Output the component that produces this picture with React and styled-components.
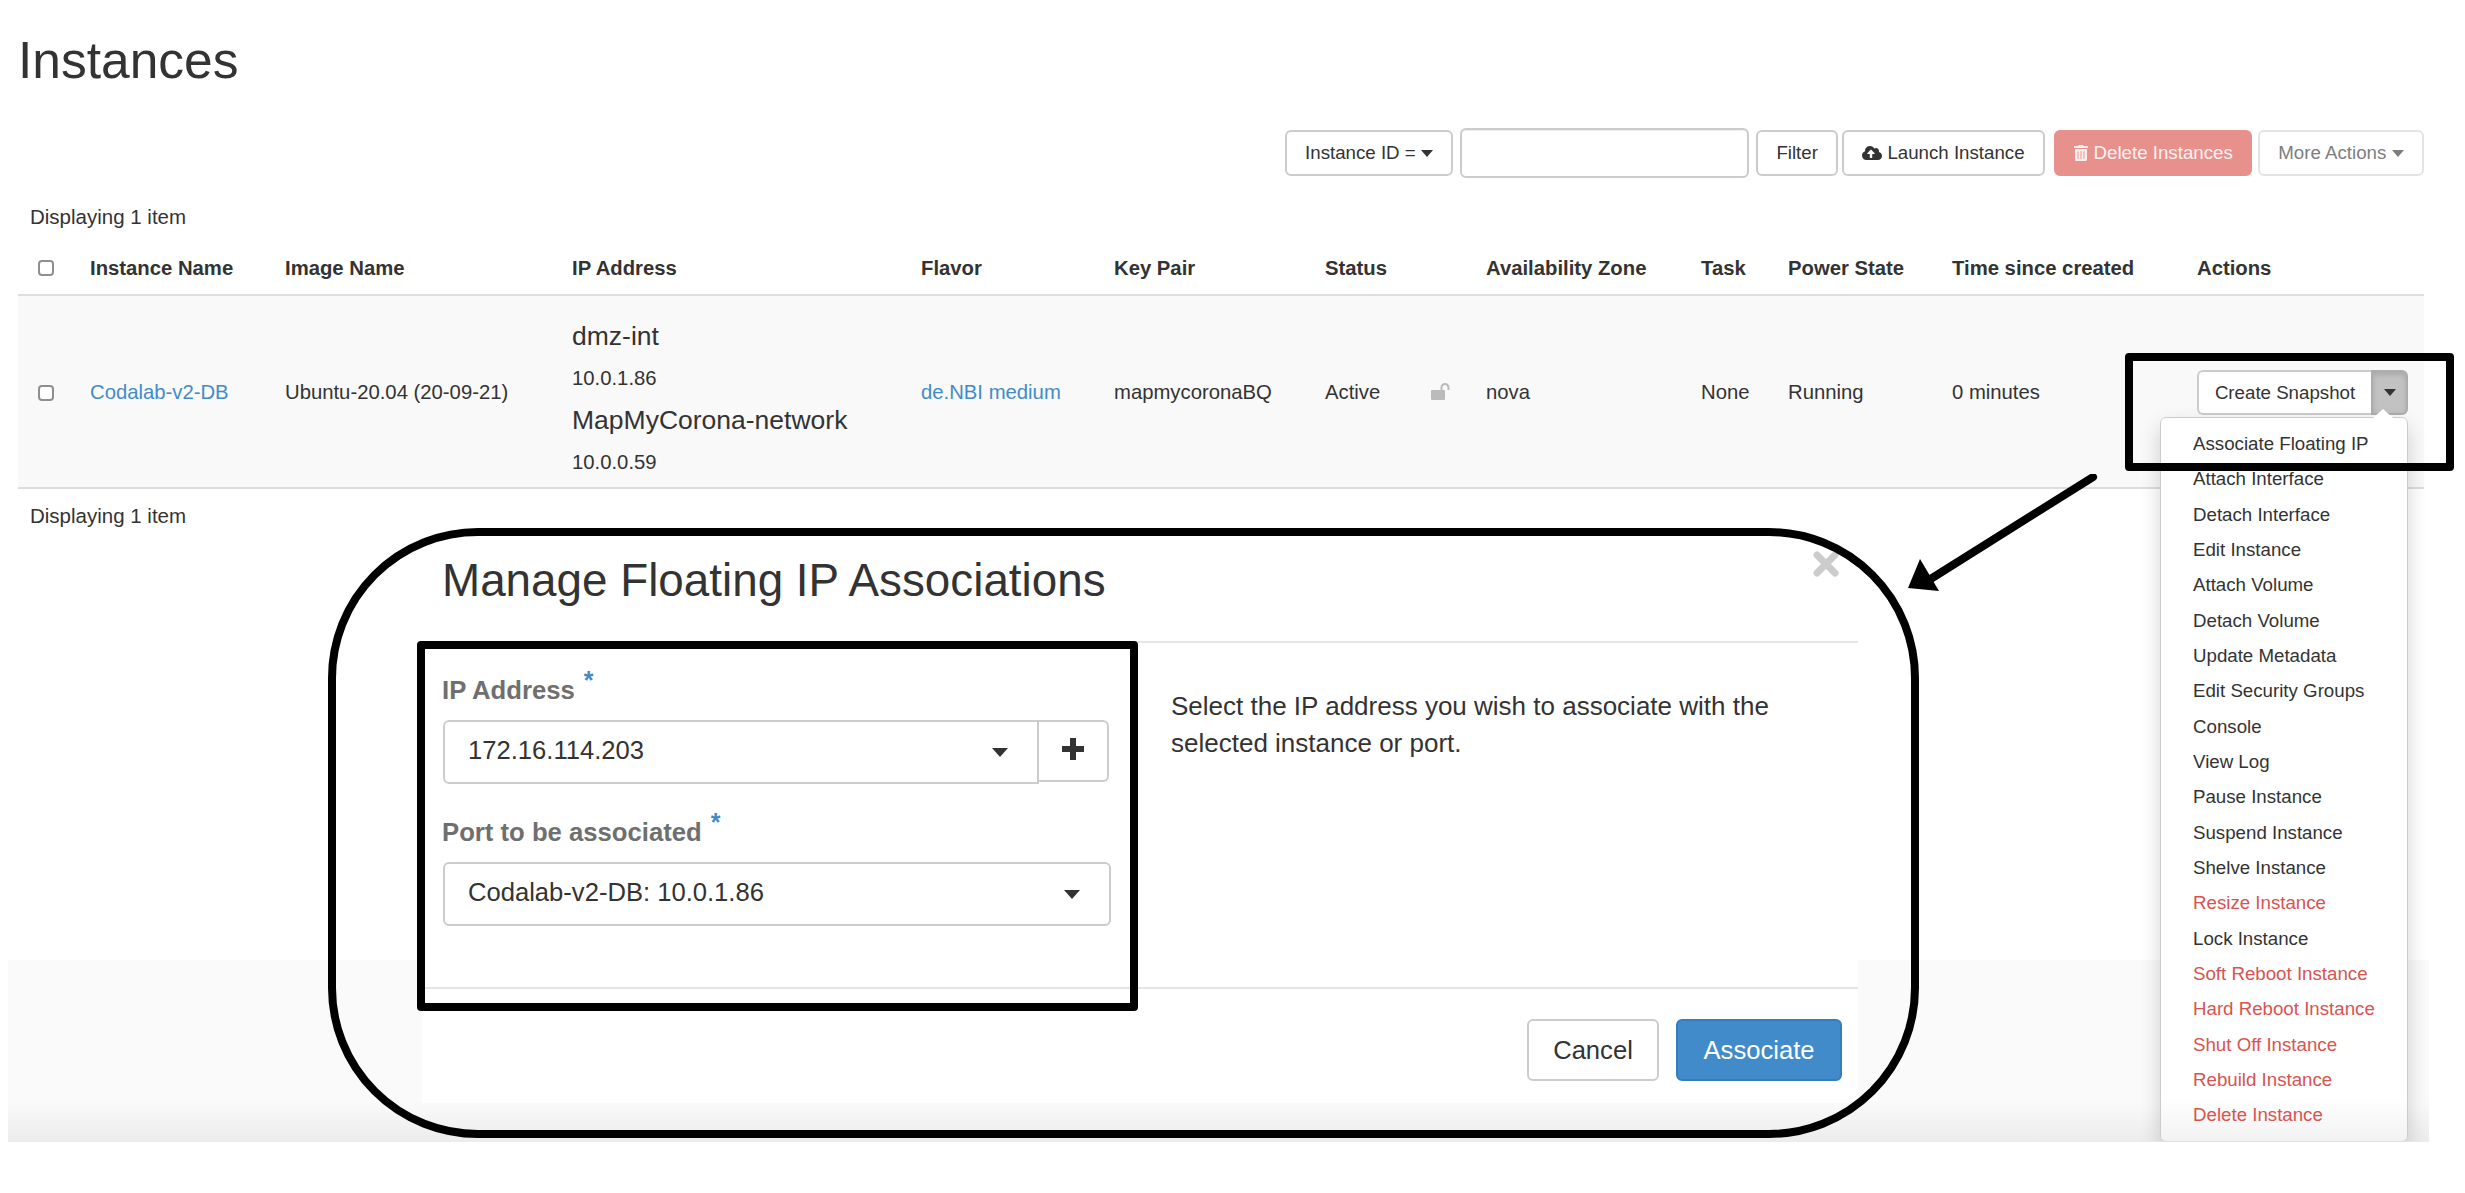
import styled, { createGlobalStyle } from "styled-components"
import { FaCloudUploadAlt, FaTrashAlt } from "react-icons/fa"

const menuItems = [
  { label: "Associate Floating IP" },
  { label: "Attach Interface" },
  { label: "Detach Interface" },
  { label: "Edit Instance" },
  { label: "Attach Volume" },
  { label: "Detach Volume" },
  { label: "Update Metadata" },
  { label: "Edit Security Groups" },
  { label: "Console" },
  { label: "View Log" },
  { label: "Pause Instance" },
  { label: "Suspend Instance" },
  { label: "Shelve Instance" },
  { label: "Resize Instance", danger: true },
  { label: "Lock Instance" },
  { label: "Soft Reboot Instance", danger: true },
  { label: "Hard Reboot Instance", danger: true },
  { label: "Shut Off Instance", danger: true },
  { label: "Rebuild Instance", danger: true },
  { label: "Delete Instance", danger: true },
]

const columns = [72, 195, 287, 349, 193, 211, 161, 215, 87, 164, 245, 227]

const App = () => {
  return (
    <Page>
      <GlobalStyle />
      <Title>Instances</Title>

      <Toolbar>
        <Button>
          Instance ID = <Caret />
        </Button>
        <FilterInput />
        <FilterButton>Filter</FilterButton>
        <LaunchButton>
          <FaCloudUploadAlt size={20} />
          <IconGap />
          Launch Instance
        </LaunchButton>
        <DeleteButton>
          <FaTrashAlt size={16} />
          <IconGap />
          Delete Instances
        </DeleteButton>
        <MutedButton>
          More Actions <Caret />
        </MutedButton>
      </Toolbar>

      <Count>Displaying 1 item</Count>

      <InstanceTable>
        <colgroup>
          {columns.map((width, i) => (
            <col key={i} width={width} />
          ))}
        </colgroup>
        <thead>
          <tr>
            <th><Check /></th>
            <th>Instance Name</th>
            <th>Image Name</th>
            <th>IP Address</th>
            <th>Flavor</th>
            <th>Key Pair</th>
            <th>Status</th>
            <th>Availability Zone</th>
            <th>Task</th>
            <th>Power State</th>
            <th>Time since created</th>
            <th>Actions</th>
          </tr>
        </thead>
        <tbody>
          <tr>
            <td><Check /></td>
            <td><TextLink>Codalab-v2-DB</TextLink></td>
            <td>Ubuntu-20.04 (20-09-21)</td>
            <td>
              <AddressList>
                <NetworkName>dmz-int</NetworkName>
                <Address>10.0.1.86</Address>
                <NetworkName>MapMyCorona-network</NetworkName>
                <Address>10.0.0.59</Address>
              </AddressList>
            </td>
            <td><TextLink>de.NBI medium</TextLink></td>
            <td>mapmycoronaBQ</td>
            <td>
              <StatusCell>
                <StatusText>Active</StatusText>
                <LockIcon viewBox="0 0 20 17">
                  <rect x="0" y="7" width="14" height="10" rx="1" fill="#bbb" />
                  <path d="M10.5 7V4.5a3.5 3.5 0 0 1 7 0V7" fill="none" stroke="#bbb" strokeWidth="2" />
                </LockIcon>
              </StatusCell>
            </td>
            <td>nova</td>
            <td>None</td>
            <td>Running</td>
            <td>0 minutes</td>
            <td>
              <ActionGroup>
                <SnapshotButton>Create Snapshot</SnapshotButton>
                <ToggleButton><Caret /></ToggleButton>
                <ActionMenu>
                  {menuItems.map((item) => (
                    <MenuItem key={item.label} $danger={item.danger}>{item.label}</MenuItem>
                  ))}
                </ActionMenu>
              </ActionGroup>
            </td>
          </tr>
        </tbody>
      </InstanceTable>

      <BottomCount>Displaying 1 item</BottomCount>

      <Backdrop />

      <Modal>
        <ModalHeader>
          <ModalTitle>Manage Floating IP Associations</ModalTitle>
          <CloseIcon viewBox="0 0 26 26">
            <path d="M4 4L22 22M22 4L4 22" stroke="#ccc" strokeWidth="7" strokeLinecap="round" fill="none" />
          </CloseIcon>
        </ModalHeader>

        <ModalBody>
          <Fields>
            <FieldLabel>IP Address<Required>*</Required></FieldLabel>
            <InputGroup>
              <GroupedSelect>
                172.16.114.203
                <SelectCaret />
              </GroupedSelect>
              <PlusButton>
                <svg width="22" height="22" viewBox="0 0 22 22">
                  <path d="M11 0V22M0 11H22" stroke="#333" strokeWidth="6" fill="none" />
                </svg>
              </PlusButton>
            </InputGroup>

            <PortLabel>Port to be associated<Required>*</Required></PortLabel>
            <Select>
              Codalab-v2-DB: 10.0.1.86
              <SelectCaret />
            </Select>
          </Fields>
          <HelpText>Select the IP address you wish to associate with the selected instance or port.</HelpText>
        </ModalBody>

        <ModalFooter>
          <FooterButton>Cancel</FooterButton>
          <PrimaryButton>Associate</PrimaryButton>
        </ModalFooter>
      </Modal>

      <CalloutFrame />
      <FieldsHighlight />
      <ActionsHighlight />
      <Arrow viewBox="0 0 200 130" width="200" height="130">
        <path d="M188 3L24 106" stroke="#000" strokeWidth="8" strokeLinecap="round" fill="none" />
        <path d="M3 114L15 85L34 117Z" fill="#000" />
      </Arrow>
    </Page>
  )
}

export default App

const GlobalStyle = createGlobalStyle`
body {
  margin:0;
  background:#fff;
  font-family:"Liberation Sans", Arial, sans-serif;
  color:#333;
}
* {
  box-sizing:border-box;
}
`

const Page = styled.div`
position:relative;
min-height:100vh;
overflow:hidden;
`

const Title = styled.h1`
margin:0;
padding:32px 0 0 18px;
font-size:51.500px;
line-height:56px;
font-weight:400;
`

const Toolbar = styled.div`
display:flex;
justify-content:flex-end;
align-items:center;
gap:7px;
height:50px;
margin-top:40px;
padding-right:41px;
`

const Button = styled.div`
display:flex;
align-items:center;
height:46px;
padding:0 18px;
background:#fff;
border:2px solid #ccc;
border-radius:6px;
font-size:18.700px;
white-space:pre;
color:#333;
`

const FilterButton = styled(Button)`
padding:0 18.500px;
margin-right:-3px;
`

const LaunchButton = styled(Button)`
padding:0 18px;
`

const DeleteButton = styled(Button)`
padding:0 17px;
margin:0 -1px 0 2px;
background:#e8918c;
border-color:#e8918c;
color:#fdf2f1;
`

const MutedButton = styled(Button)`
padding:0 18.500px;
border-color:#e4e4e4;
color:#7d7d7d;
`

const IconGap = styled.span`
width:5px;
`

const Caret = styled.span`
display:inline-block;
width:0;
height:0;
border-left:6.500px solid transparent;
border-right:6.500px solid transparent;
border-top:7px solid currentColor;
`

const FilterInput = styled.div`
width:289px;
height:50px;
background:#fff;
border:2px solid #ccc;
border-radius:6px;
box-shadow:inset 0 1px 1px rgba(0,0,0,.075);
`

const Count = styled.div`
padding-left:30px;
margin-top:24px;
font-size:20.500px;
line-height:30px;
`

const BottomCount = styled(Count)`
margin-top:12px;
`

const InstanceTable = styled.table`
width:2406px;
margin-left:18px;
border-collapse:collapse;
table-layout:fixed;
font-size:20.300px;

th {
  height:63px;
  padding:10px 0 0;
  text-align:left;
  font-weight:700;
  border-bottom:2px solid #ddd;
}
td {
  padding:2px 0 0;
  background:#f9f9f9;
  border-bottom:2px solid #ddd;
}
th:first-child, td:first-child {
  padding-left:20px;
}
`

const Check = styled.span`
display:block;
width:16px;
height:16px;
background:#fff;
border:2px solid #8f8f8f;
border-radius:4px;
`

const TextLink = styled.a`
color:#428bca;
`

const AddressList = styled.div`
padding:17px 0 4px;
`

const NetworkName = styled.div`
font-size:26.500px;
line-height:42px;
`

const Address = styled.div`
font-size:20.300px;
line-height:42px;
`

const StatusCell = styled.div`
display:flex;
align-items:center;
`

const StatusText = styled.span`
width:106px;
`

const LockIcon = styled.svg`
width:20px;
height:17px;
margin-top:-2px;
`

const ActionGroup = styled.div`
position:relative;
display:flex;
width:211px;
`

const SnapshotButton = styled.div`
width:174px;
height:45px;
background:#fff;
border:2px solid #ccc;
border-right:none;
border-radius:6px 0 0 6px;
font-size:18.700px;
line-height:41px;
text-align:center;
`

const ToggleButton = styled.div`
display:flex;
align-items:center;
justify-content:center;
width:37px;
height:45px;
background:#c2c2c2;
border:2px solid #adadad;
border-radius:0 6px 6px 0;
box-shadow:inset 0 3px 5px rgba(0,0,0,.125);
`

const ActionMenu = styled.div`
position:absolute;
z-index:2;
top:47px;
right:0;
width:248px;
padding:8px 0;
background:linear-gradient(#fff 0, #fff 94%, #f2f2f2 100%);
border:1px solid #ccc;
border-radius:6px;
box-shadow:0 9px 20px rgba(0,0,0,.175);
clip-path:inset(-30px -30px 0 -30px);

&::before {
  content:"";
  position:absolute;
  top:-9px;
  right:14px;
  border-left:10px solid transparent;
  border-right:10px solid transparent;
  border-bottom:9px solid #fff;
}
`

const MenuItem = styled.div`
height:35.330px;
padding-left:32px;
font-size:18.700px;
line-height:35.330px;
white-space:nowrap;
color:${(props) => (props.$danger ? "#d9534f" : "#333")};
`

const Backdrop = styled.div`
position:absolute;
top:960px;
left:8px;
width:2421px;
height:182px;
background:linear-gradient(#fafafa 0, #fafafa 78%, #ececec 100%);
`

const Modal = styled.section`
position:relative;
z-index:1;
width:1436px;
margin-left:422px;
background:#fff;
`

const ModalHeader = styled.header`
position:relative;
padding:25px 0 35px 20px;
border-bottom:2px solid #e5e5e5;
`

const ModalTitle = styled.h3`
margin:0;
font-size:45.800px;
line-height:50px;
font-weight:400;
`

const CloseIcon = styled.svg`
position:absolute;
top:20px;
right:19px;
width:26px;
height:26px;
`

const ModalBody = styled.div`
display:flex;
height:344px;
padding:32px 0 0 21px;
font-size:25.600px;
`

const Fields = styled.div`
width:668px;
`

const FieldLabel = styled.label`
display:block;
margin:0 0 15px -1px;
font-weight:700;
font-size:25.700px;
line-height:30px;
color:#6f6f6f;
`

const PortLabel = styled(FieldLabel)`
margin-top:33px;
`

const Required = styled.sup`
margin-left:9px;
font-size:25px;
line-height:0;
color:#428bca;
`

const InputGroup = styled.div`
display:flex;
align-items:flex-start;
`

const Select = styled.div`
position:relative;
height:64px;
padding-left:23px;
background:#fff;
border:2px solid #ccc;
border-radius:6px;
line-height:57px;
`

const GroupedSelect = styled(Select)`
width:596px;
border-radius:6px 0 0 6px;
`

const SelectCaret = styled.span`
position:absolute;
top:26px;
right:29px;
width:0;
height:0;
border-left:8px solid transparent;
border-right:8px solid transparent;
border-top:9px solid #333;
`

const PlusButton = styled.div`
display:flex;
align-items:center;
justify-content:center;
width:70px;
height:62px;
padding-bottom:4px;
border:2px solid #ccc;
border-left:none;
border-radius:0 6px 6px 0;
`

const HelpText = styled.p`
width:640px;
margin:0 0 0 60px;
padding-top:13px;
font-size:26px;
line-height:36.500px;
`

const ModalFooter = styled.footer`
display:flex;
justify-content:flex-end;
gap:17px;
padding:30px 16px 22px;
border-top:2px solid #e5e5e5;
`

const FooterButton = styled.div`
display:flex;
align-items:center;
justify-content:center;
width:132px;
height:62px;
background:#fff;
border:2px solid #ccc;
border-radius:6px;
font-size:25.600px;
`

const PrimaryButton = styled(FooterButton)`
width:166px;
background:#428bca;
border-color:#357ebd;
color:#fff;
`

const CalloutFrame = styled.div`
position:absolute;
z-index:3;
top:528px;
left:328px;
width:1591px;
height:610px;
border:8px solid #000;
border-radius:150px;
pointer-events:none;
`

const Highlight = styled.div`
position:absolute;
z-index:3;
border:8px solid #000;
border-radius:4px;
pointer-events:none;
`

const FieldsHighlight = styled(Highlight)`
top:641px;
left:417px;
width:721px;
height:370px;
`

const ActionsHighlight = styled(Highlight)`
top:353px;
left:2125px;
width:329px;
height:118px;
`

const Arrow = styled.svg`
position:absolute;
z-index:3;
top:474px;
left:1905px;
`
